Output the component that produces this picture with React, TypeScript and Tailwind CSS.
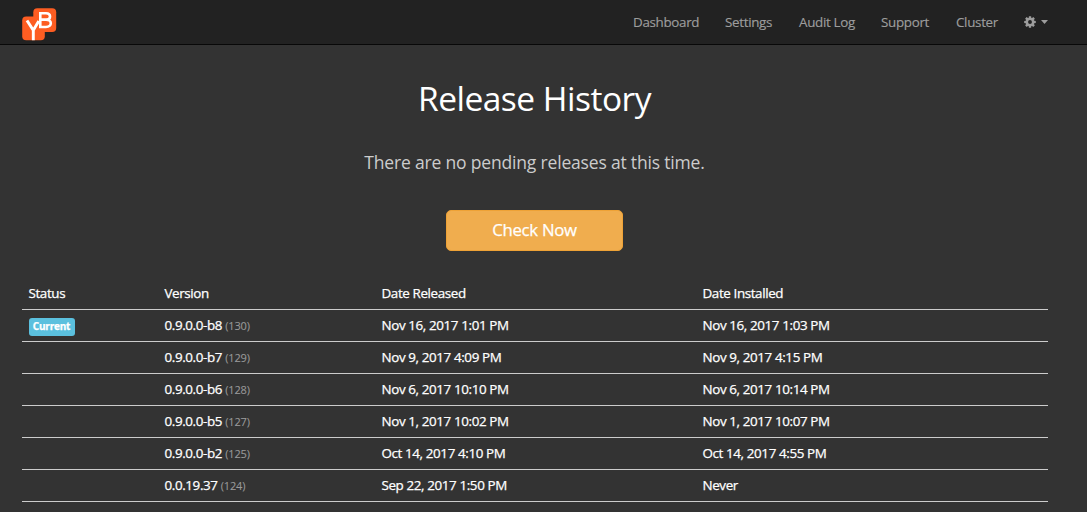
const releases = [
  { version: "0.9.0.0-b8", build: 130, released: "Nov 16, 2017 1:01 PM", installed: "Nov 16, 2017 1:03 PM", current: true },
  { version: "0.9.0.0-b7", build: 129, released: "Nov 9, 2017 4:09 PM", installed: "Nov 9, 2017 4:15 PM" },
  { version: "0.9.0.0-b6", build: 128, released: "Nov 6, 2017 10:10 PM", installed: "Nov 6, 2017 10:14 PM" },
  { version: "0.9.0.0-b5", build: 127, released: "Nov 1, 2017 10:02 PM", installed: "Nov 1, 2017 10:07 PM" },
  { version: "0.9.0.0-b2", build: 125, released: "Oct 14, 2017 4:10 PM", installed: "Oct 14, 2017 4:55 PM" },
  { version: "0.0.19.37", build: 124, released: "Sep 22, 2017 1:50 PM", installed: "Never" },
];

function Logo() {
  return (
    <svg width="36" height="34" viewBox="0 0 36 34" className="block" aria-label="YB">
      <rect x="11.3" y="0.3" width="22.9" height="23.7" rx="4" fill="#fd5d22" />
      <rect x="0.2" y="8.6" width="22.6" height="23.7" rx="4" fill="#fd5d22" />
      <g fill="none" stroke="#fff" strokeWidth="2.6">
        <path d="M18.3 5.2V19M17 5.2H24C29.4 5.2 29.4 11.6 24 11.6H18.3M24 11.6C30.4 11.6 30.4 19 24 19H17" />
        <path d="M5 12.5L11.3 22.2L16.8 13M11.3 21.5V32.2" strokeWidth="2.9" />
      </g>
    </svg>
  );
}

function Cog() {
  return (
    <svg width="12" height="12" viewBox="0 0 12 12" className="block" fill="#9d9d9d">
      {[0, 45, 90, 135].map((a) => (
        <path key={a} d="M4.9 0.2H7.1L7.4 2.6H4.6ZM4.9 11.8H7.1L7.4 9.4H4.6Z" transform={`rotate(${a} 6 6)`} />
      ))}
      <circle cx="6" cy="6" r="3.15" fill="none" stroke="#9d9d9d" strokeWidth="2.4" />
    </svg>
  );
}

const columns = "grid grid-cols-[136px_217px_321px_352px]";

export default function App() {
  return (
    <div className="h-[512px] overflow-hidden bg-[#333333] font-['Open_Sans',sans-serif] text-white">
      <header className="flex h-[45px] items-start justify-between border-b border-[#080808] bg-[#222222] pr-[39px] pl-[22px]">
        <div className="pt-2">
          <Logo />
        </div>
        <nav className="flex pt-[11.5px] text-[13.4px] leading-5 tracking-[-0.32px] text-[#9d9d9d] [-webkit-text-stroke:0.15px]">
          <a className="w-[92px]">Dashboard</a>
          <a className="w-[74px]">Settings</a>
          <a className="w-[82px]">Audit Log</a>
          <a className="w-[75px]">Support</a>
          <a className="w-[68px]">Cluster</a>
          <a className="flex h-5 items-center gap-[5px]">
            <Cog />
            <svg width="7" height="4" viewBox="0 0 7 4" fill="#9d9d9d">
              <path d="M0 0H7L3.5 4Z" />
            </svg>
          </a>
        </nav>
      </header>
      <main className="mx-[22px] w-[1026px]">
        <div className="flex w-[1025px] flex-col items-center">
          <h1 className="mt-[33px] text-[33.5px] leading-10 tracking-[-0.5px]">Release History</h1>
          <p className="mt-[32px] text-[17.5px] leading-6 tracking-[-0.18px] text-[#cccccc]">There are no pending releases at this time.</p>
          <button className="mt-[36px] h-[41px] w-[177px] rounded-[5px] border border-[#eea236] bg-[#f0ad4e] pb-0.5 text-[16.8px] leading-6 tracking-[-0.3px] [-webkit-text-stroke:0.25px]">
            Check Now
          </button>
        </div>
        <section className="mt-[27px] text-[13.4px] tracking-[-0.38px] [-webkit-text-stroke:0.25px]">
          <div className={`${columns} h-8 items-center border-b border-[#cccccc] pl-[6.5px]`}>
            <span>Status</span>
            <span>Version</span>
            <span>Date Released</span>
            <span>Date Installed</span>
          </div>
          {releases.map((r) => (
            <div key={r.build} className={`${columns} h-8 items-center border-b border-[#cccccc] pl-[6.5px] font-medium`}>
              <span className="flex">
                {r.current && (
                  <span className="mt-[2px] flex h-[18px] w-[46px] items-center justify-center rounded-[3px] bg-[#5bc0de] text-[10px] font-bold tracking-[-0.2px]">
                    Current
                  </span>
                )}
              </span>
              <span>
                {r.version}{" "}
                <span className="text-[11px] font-normal tracking-[-0.15px] text-[#999999] [-webkit-text-stroke:0.1px]">({r.build})</span>
              </span>
              <span>{r.released}</span>
              <span>{r.installed}</span>
            </div>
          ))}
        </section>
      </main>
    </div>
  );
}
